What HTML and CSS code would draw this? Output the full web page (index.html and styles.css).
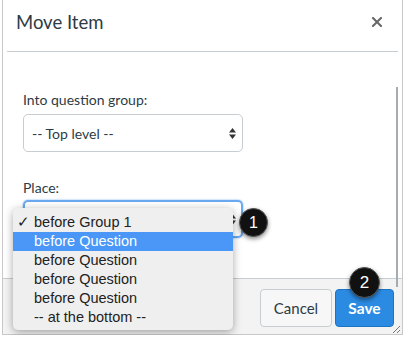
FILE: index.html
```html
<!DOCTYPE html>
<html lang="en">
<head>
    <meta charset="UTF-8">
    <meta name="viewport" content="width=device-width, initial-scale=1.0">
    <title>Move Item</title>
    <link rel="stylesheet" href="styles.css">
</head>
<body>
    <div class="dialog">
        <div class="dialog-header">
            <h1>Move Item</h1>
            <svg class="close-icon" width="10" height="10" viewBox="0 0 10 10">
                <path d="M1 1 L9 9 M9 1 L1 9" stroke="#666" stroke-width="2" stroke-linecap="square"/>
            </svg>
        </div>

        <div class="dialog-body">
            <label class="field-label">Into question group:</label>
            <div class="select">
                <span>-- Top level --</span>
                <svg class="arrows" width="7" height="11" viewBox="0 0 7 11">
                    <path d="M3.5 0 L7 4.5 L0 4.5 Z M0 6.5 L7 6.5 L3.5 11 Z" fill="#333"/>
                </svg>
            </div>

            <label class="field-label place-label">Place:</label>
            <div class="select select-focus">
                <span></span>
                <svg class="arrows" width="7" height="11" viewBox="0 0 7 11">
                    <path d="M3.5 0 L7 4.5 L0 4.5 Z M0 6.5 L7 6.5 L3.5 11 Z" fill="#333"/>
                </svg>
            </div>
        </div>

        <div class="dialog-footer">
            <button class="btn btn-cancel">Cancel</button>
            <button class="btn btn-save">Save</button>
        </div>

        <!-- open native menu of the Place select -->
        <ul class="menu">
            <li class="checked"><span class="check">✓</span>before Group 1</li>
            <li class="active">before Question</li>
            <li>before Question</li>
            <li>before Question</li>
            <li>before Question</li>
            <li>-- at the bottom --</li>
        </ul>

        <div class="scroll-thumb"></div>
        <svg class="resize" width="9" height="9" viewBox="0 0 9 9">
            <path d="M1 8 L8 1 M5 8 L8 5" stroke="#777" stroke-width="1"/>
        </svg>

        <div class="badge badge-one">1</div>
        <div class="badge badge-two">2</div>
    </div>
</body>
</html>
```

FILE: styles.css
```css
* {
    margin: 0;
    padding: 0;
    box-sizing: border-box;
}

body {
    font-family: 'Lato', 'Open Sans', sans-serif;
    background: white;
    color: #2d3b45;
    overflow: hidden;
}

.dialog {
    position: relative;
    margin-left: 2px;
    width: 401px;
    height: 335px;
    border: 1px solid #c8c8c8;
    border-top: none;
    background: white;
    display: flex;
    flex-direction: column;
}

.dialog-header {
    height: 52px;
    margin: 0 4px;
    padding: 0 16px 8px 9px;
    border-bottom: 1px solid #c7cdd1;
    display: flex;
    align-items: center;
    justify-content: space-between;
}

.dialog-header h1 {
    font-size: 18.5px;
    font-weight: 400;
    color: #2d3b45;
}

.dialog-body {
    flex: 1;
    padding: 38px 0 0 20px;
}

.field-label {
    display: block;
    font-size: 14px;
    line-height: 20px;
}

.place-label {
    margin-top: 26px;
}

.select {
    margin-top: 4px;
    width: 220px;
    height: 38px;
    border: 1px solid #c7cdd1;
    border-radius: 5px;
    padding: 0 6px 0 8px;
    display: flex;
    align-items: center;
    justify-content: space-between;
    font-size: 14px;
}

.select-focus {
    margin-top: 2px;
    border: 2px solid #6aa8f0;
    box-shadow: 0 0 2px #6aa8f0;
    padding: 0 5px 0 7px;
}

.dialog-footer {
    height: 56px;
    border-top: 1px solid #c7cdd1;
    background: #f3f3f3;
    display: flex;
    justify-content: flex-end;
    align-items: flex-start;
    gap: 3px;
    padding: 10px 8px 0 0;
}

.btn {
    height: 38px;
    border-radius: 4px;
    font-family: 'Lato', sans-serif;
    font-size: 15px;
    padding: 0 10px;
}

.btn-cancel {
    width: 72px;
    background: #f7f7f7;
    border: 1px solid #c7cdd1;
    color: #2d3b45;
}

.btn-save {
    width: 59px;
    background: #2b8be3;
    border: 1px solid #1d73c4;
    color: white;
    font-weight: 700;
    font-size: 15.5px;
}

.menu {
    position: absolute;
    left: 10px;
    top: 208px;
    width: 220px;
    height: 122px;
    list-style: none;
    background: #efefef;
    border-radius: 5px;
    box-shadow: 0 2px 8px rgba(0,0,0,0.35);
    padding-top: 5px;
    font-family: 'Liberation Sans', 'Noto Sans', sans-serif;
    font-size: 14.5px;
    color: #222;
}

.menu li {
    position: relative;
    height: 19px;
    line-height: 19px;
    padding-left: 21px;
}

.menu li.active {
    background: #4a97f7;
    color: white;
}

.check {
    position: absolute;
    left: 4px;
    top: 0;
}

.scroll-thumb {
    position: absolute;
    left: 393px;
    top: 87px;
    width: 2px;
    height: 200px;
    background: #a4acb3;
}

.resize {
    position: absolute;
    left: 389px;
    top: 325px;
}

.badge {
    position: absolute;
    border-radius: 50%;
    background: #111;
    color: white;
    font-family: 'Liberation Sans', sans-serif;
    display: flex;
    align-items: center;
    justify-content: center;
    box-shadow: 0 2px 4px rgba(0,0,0,0.45);
    border: 1px solid #555;
}

.badge-one {
    left: 236px;
    top: 208px;
    width: 29px;
    height: 29px;
    font-size: 16px;
}

.badge-two {
    left: 346px;
    top: 267px;
    width: 31px;
    height: 31px;
    font-size: 17px;
}
```
